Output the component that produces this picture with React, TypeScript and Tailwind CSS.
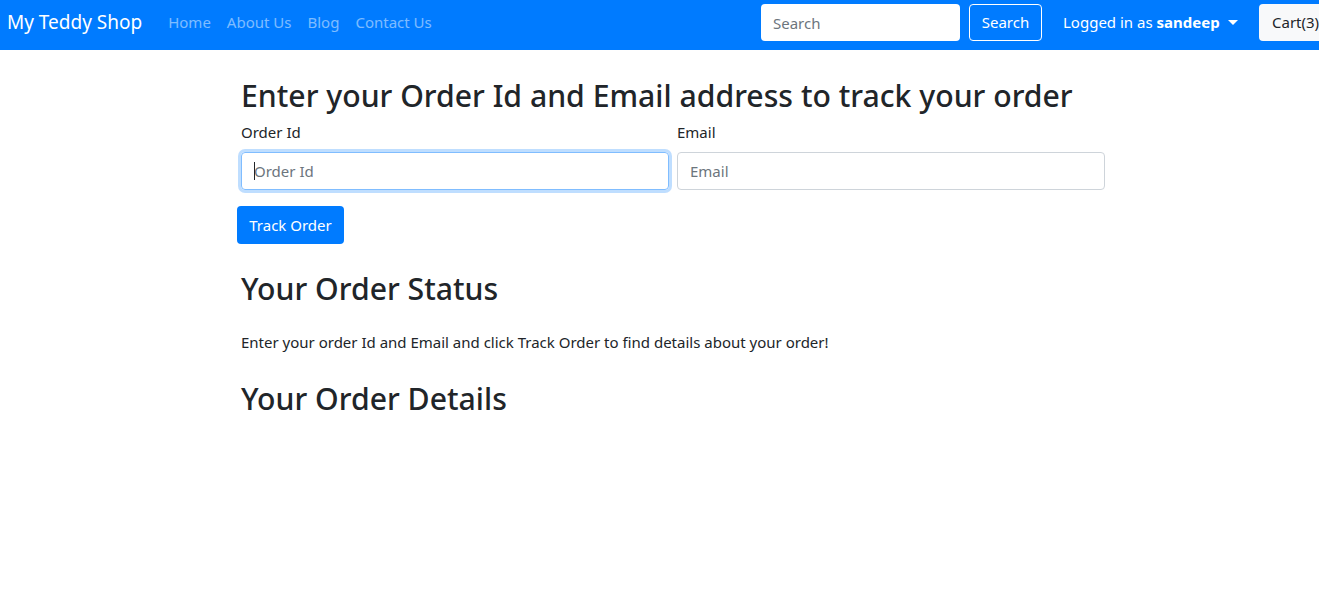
import React from 'react';

const App: React.FC = () => {
    return (
        <div className="min-h-screen w-full overflow-hidden bg-white text-[#212529]" style={{ fontFamily: '"Noto Sans", "Open Sans", sans-serif' }}>
            <nav className="h-[50px] bg-[#007bff] flex items-start pt-[4px] pl-[7px] w-[1331px] text-[15px]">
                <a href="#" className="text-white text-[19px] leading-[37px] mr-[18px]">My Teddy Shop</a>
                <div className="flex items-center leading-[37px] text-[rgba(255,255,255,0.5)]">
                    <a href="#" className="px-[8px]">Home</a>
                    <a href="#" className="px-[8px]">About Us</a>
                    <a href="#" className="px-[8px]">Blog</a>
                    <a href="#" className="px-[8px]">Contact Us</a>
                </div>
                <div className="flex-1" />
                <form className="flex items-center" onSubmit={(e) => e.preventDefault()}>
                    <input type="text" placeholder="Search" className="w-[199px] h-[37px] bg-white rounded-[4px] px-3 placeholder-[#6c757d] outline-none" />
                    <button type="submit" className="ml-[9px] w-[73px] h-[37px] border border-white rounded-[4px] text-white">Search</button>
                </form>
                <div className="w-[196px] ml-[13px] px-2 flex items-center h-[37px] text-white">
                    <span>Logged in as <b>sandeep</b></span>
                    <span className="ml-[8px] w-0 h-0 border-l-[5px] border-r-[5px] border-t-[5px] border-l-transparent border-r-transparent border-t-white" />
                </div>
                <button className="ml-[8px] w-[72px] h-[37px] pl-[13px] text-left bg-[#f8f9fa] rounded-[4px] text-[#212529]">Cart(3)</button>
            </nav>

            <main className="ml-[241px] w-[864px]">
                <h2 className="mt-[28px] text-[30.2px] leading-[36px] font-medium">Enter your Order Id and Email address to track your order</h2>
                <div className="mt-[6px] flex gap-[8px] text-[15px]">
                    <div className="flex-1">
                        <label className="block leading-6 mb-2">Order Id</label>
                        <div className="relative">
                            <input type="text" placeholder="Order Id" className="w-full h-[38px] px-3 rounded-[4px] border border-[#80bdff] shadow-[0_0_0_3px_rgba(0,123,255,0.25)] placeholder-[#6c757d] outline-none" />
                            <span className="absolute left-[13px] top-[10px] w-px h-[18px] bg-[#212529]" />
                        </div>
                    </div>
                    <div className="flex-1">
                        <label className="block leading-6 mb-2">Email</label>
                        <input type="email" placeholder="Email" className="w-full h-[38px] px-3 rounded-[4px] border border-[#ced4da] placeholder-[#6c757d] outline-none" />
                    </div>
                </div>
                <button className="mt-[16px] -ml-[4px] w-[107px] h-[38px] bg-[#007bff] text-white text-[15px] rounded-[4px]">Track Order</button>

                <h2 className="mt-[27px] text-[30.2px] leading-[36px] font-medium">Your Order Status</h2>
                <p className="mt-[23px] text-[15px] leading-6">Enter your order Id and Email and click Track Order to find details about your order!</p>
                <h2 className="mt-[27px] text-[30.2px] leading-[36px] font-medium">Your Order Details</h2>
            </main>
        </div>
    );
};

export default App;
